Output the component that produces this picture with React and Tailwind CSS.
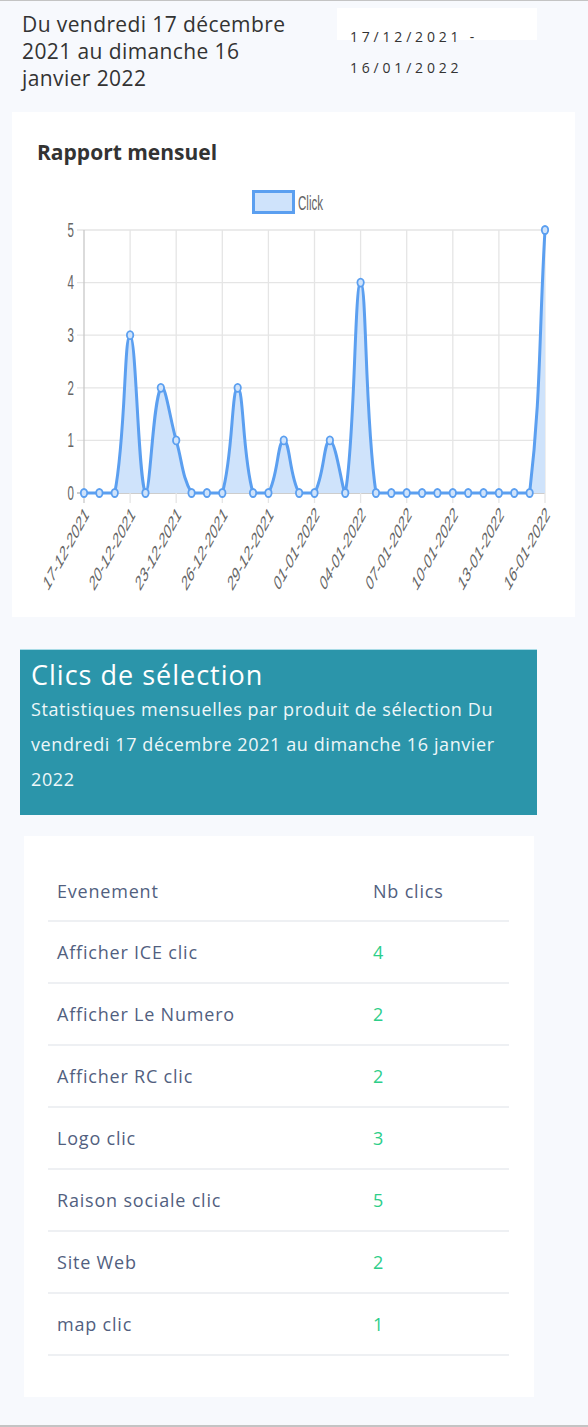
import React from "react";

const values = [0, 0, 0, 3, 0, 2, 1, 0, 0, 0, 2, 0, 0, 1, 0, 0, 1, 0, 4, 0, 0, 0, 0, 0, 0, 0, 0, 0, 0, 0, 5];
const labels = ["17-12-2021", "20-12-2021", "23-12-2021", "26-12-2021", "29-12-2021", "01-01-2022", "04-01-2022", "07-01-2022", "10-01-2022", "13-01-2022", "16-01-2022"];

const rows = [
  ["Afficher ICE clic", 4],
  ["Afficher Le Numero", 2],
  ["Afficher RC clic", 2],
  ["Logo clic", 3],
  ["Raison sociale clic", 5],
  ["Site Web", 2],
  ["map clic", 1],
];

const LEFT = 84;
const RIGHT = 545;
const TOP = 230;
const BOTTOM = 493;
const px = (i) => LEFT + (i * (RIGHT - LEFT)) / 30;
const py = (v) => BOTTOM - (v * (BOTTOM - TOP)) / 5;

// same idea as chart.js splineCurve, tension 0.4
function buildPath() {
  const pts = values.map((v, i) => ({ x: px(i), y: py(v) }));
  const cps = pts.map((cur, i) => {
    const prev = pts[i - 1] || cur;
    const next = pts[i + 1] || cur;
    const d01 = Math.hypot(cur.x - prev.x, cur.y - prev.y);
    const d12 = Math.hypot(next.x - cur.x, next.y - cur.y);
    let s01 = d01 / (d01 + d12);
    let s12 = d12 / (d01 + d12);
    if (isNaN(s01)) s01 = 0;
    if (isNaN(s12)) s12 = 0;
    const fa = 0.4 * s01;
    const fb = 0.4 * s12;
    return {
      px: cur.x - fa * (next.x - prev.x),
      py: Math.min(BOTTOM, cur.y - fa * (next.y - prev.y)),
      nx: cur.x + fb * (next.x - prev.x),
      ny: Math.min(BOTTOM, cur.y + fb * (next.y - prev.y)),
    };
  });
  let d = `M${pts[0].x},${pts[0].y}`;
  for (let i = 1; i < pts.length; i++) {
    d += ` C${cps[i - 1].nx},${cps[i - 1].ny} ${cps[i].px},${cps[i].py} ${pts[i].x},${pts[i].y}`;
  }
  return { d, pts };
}

function Chart() {
  const { d, pts } = buildPath();
  const font = "'Liberation Sans', Arial, sans-serif";
  return (
    <svg width="563" height="453" className="block">
      <g transform="translate(-12,-164)">
        {/* legend */}
        <rect x="253.5" y="191.5" width="40" height="21" fill="#cfe3fb" stroke="#5b9ff0" strokeWidth="3" />
        <text transform="translate(298,203) scale(0.55,1)" fontFamily={font} fontSize="21" fill="#666" dominantBaseline="central">
          Click
        </text>

        {/* grid */}
        {[0, 1, 2, 3, 4, 5].map((v) => (
          <line key={v} x1={LEFT - 7} x2={RIGHT} y1={py(v)} y2={py(v)} stroke={v === 0 ? "#bdbdbd" : "#e5e5e5"} strokeWidth="1.3" />
        ))}
        {labels.map((_, k) => (
          <line key={k} x1={px(k * 3)} x2={px(k * 3)} y1={TOP} y2={BOTTOM + 10} stroke={k === 0 ? "#c8c8c8" : "#e5e5e5"} strokeWidth="1.3" />
        ))}

        {/* y labels */}
        {[0, 1, 2, 3, 4, 5].map((v) => (
          <text key={v} transform={`translate(74,${py(v)}) scale(0.55,1)`} fontFamily={font} fontSize="21" fill="#666" textAnchor="end" dominantBaseline="central">
            {v}
          </text>
        ))}

        {/* x labels */}
        {labels.map((l, k) => (
          <text key={l} transform={`translate(${px(k * 3) + 3},${BOTTOM + 18}) scale(0.55,1) rotate(-45)`} fontFamily={font} fontSize="21" fill="#666" textAnchor="end" dominantBaseline="central">
            {l}
          </text>
        ))}

        {/* data */}
        <path d={`${d} L${RIGHT},${BOTTOM} L${LEFT},${BOTTOM} Z`} fill="#cfe3fb" />
        <path d={d} fill="none" stroke="#5b9ff0" strokeWidth="3" />
        {pts.map((p, i) => (
          <ellipse key={i} cx={p.x} cy={p.y} rx="3.2" ry="4" fill="#cfe3fb" stroke="#5b9ff0" strokeWidth="1.8" />
        ))}
      </g>
    </svg>
  );
}

export default function App() {
  return (
    <div className="w-[588px] min-h-[1427px] bg-[#f7f9fd] border-t border-b-2 border-[#c4c4c4] font-['Open_Sans','Noto_Sans',sans-serif]">
      {/* header */}
      <div className="flex pl-[22px] pt-[10px] pb-[20px]">
        <div className="w-[290px] text-[21px] leading-[27px] tracking-[0.4px] text-[#333]">
          Du vendredi 17 décembre 2021 au dimanche 16 janvier 2022
        </div>
        <div className="ml-[25px] w-[200px] h-[32px] mt-[-3px] bg-white pl-[13px] pt-[13px] text-[14px] leading-[31px] tracking-[3.8px] text-[#333]">
          17/12/2021 - 16/01/2022
        </div>
      </div>

      {/* chart card */}
      <div className="ml-[12px] w-[563px] h-[505px] bg-white">
        <div className="pt-[28px] pl-[25px] text-[21px] leading-[24px] font-bold text-[#333]">Rapport mensuel</div>
        <Chart />
      </div>

      {/* teal banner */}
      <div className="ml-[20px] mt-[32px] w-[517px] h-[166px] bg-[#2b95aa] border-t border-[#a8dbe6] pl-[11px] pt-[8px] text-white">
        <div className="text-[27px] leading-[34px] tracking-[1px]">Clics de sélection</div>
        <div className="text-[18px] leading-[35px] tracking-[0.6px] text-[#eef7f9] pr-[14px]">
          Statistiques mensuelles par produit de sélection Du vendredi 17 décembre 2021 au dimanche 16 janvier 2022
        </div>
      </div>

      {/* table card */}
      <div className="ml-[24px] mt-[21px] w-[510px] h-[561px] bg-white pt-[26px] pl-[24px]">
        <table className="w-[461px] text-[18px] tracking-[0.8px] text-[#525f7f]">
          <thead>
            <tr className="h-[59px] border-b-2 border-[#eef0f3]">
              <th className="w-[316px] pl-[9px] text-left font-normal">Evenement</th>
              <th className="pl-[9px] text-left font-normal">Nb clics</th>
            </tr>
          </thead>
          <tbody>
            {rows.map(([name, n]) => (
              <tr key={name} className="h-[62px] border-b-2 border-[#eef0f3]">
                <td className="pl-[9px]">{name}</td>
                <td className="pl-[9px] text-[#2dce89]">{n}</td>
              </tr>
            ))}
          </tbody>
        </table>
      </div>
      <div className="h-[27px]" />
    </div>
  );
}
